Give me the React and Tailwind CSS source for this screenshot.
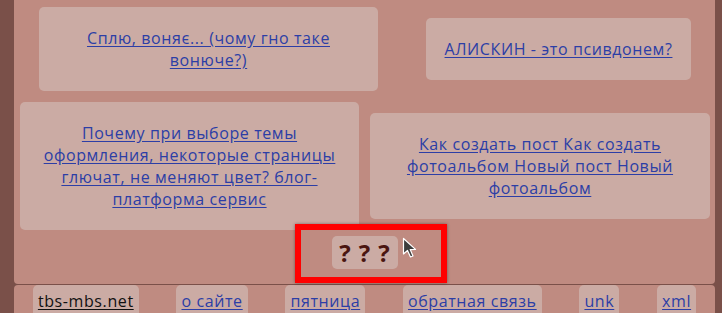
import React from "react";

const font = { fontFamily: '"Open Sans", "DejaVu Sans", sans-serif' };

function Card({ className = "", children }) {
  return (
    <div className={"rounded-[5px] bg-[#cbaba4] px-[18px] py-[20px] text-center text-[16px] leading-[22px] tracking-[0.6px] " + className}>
      <a href="#" className="text-[#2c3ea6] underline underline-offset-[2px]">{children}</a>
    </div>
  );
}

function FootItem({ children, dark }) {
  return (
    <div className="rounded-t-[5px] bg-[#cbaba4] px-[5px] pt-[5px] pb-[6px] text-[16px] leading-[22px] tracking-[0.6px]">
      <a href="#" className={(dark ? "text-[#111]" : "text-[#2c3ea6]") + " underline underline-offset-[2px]"}>{children}</a>
    </div>
  );
}

export default function App() {
  return (
    <div className="h-[313px] w-[722px] overflow-hidden bg-[#7a5049]" style={font}>
      <div className="ml-[14px] mr-[7px] rounded-b-[4px] bg-[#bf8b81] pb-[15px] pt-[7px]">
        <div className="flex items-center">
          <Card className="ml-[25px] w-[339px]">Сплю, воняє... (чому гно таке вонюче?)</Card>
          <Card className="ml-[48px] w-[265px]">АЛИСКИН - это псивдонем?</Card>
        </div>
        <div className="mt-[11px] flex items-center">
          <Card className="ml-[6px] w-[339px]">Почему при выборе темы оформления, некоторые страницы глючат, не меняют цвет? блог-платформа сервис</Card>
          <Card className="ml-[11px] w-[340px]">Как создать пост Как создать фотоальбом Новый пост Новый фотоальбом</Card>
        </div>
        <div className="mt-[6px] flex justify-center">
          <div className="relative">
            <div className="flex h-[33px] w-[66px] items-center justify-center gap-[8px] rounded-[5px] bg-[#cbaba4] text-[24px] leading-[33px] font-bold text-[#4a1510]">
              <span>?</span><span>?</span><span>?</span>
            </div>
            <div className="pointer-events-none absolute left-[-37px] top-[-12px] h-[59px] w-[152px] border-[6px] border-[#ff0000] shadow-[0_0_3px_rgba(0,0,0,0.4)]"></div>
            <svg className="absolute left-[70px] top-[1px]" width="16" height="22" viewBox="0 0 16 22">
              <path d="M1.5 1.5 L1.5 17 L5.5 13.5 L8.5 20 L11 19 L8.2 12.6 L13.5 12.4 Z" fill="#3d3d3d" stroke="#ffffff" strokeWidth="1.2" strokeLinejoin="round" />
            </svg>
          </div>
        </div>
      </div>
      <div className="ml-[14px] mr-[7px] mt-[1px] flex h-[40px] items-start justify-around rounded-t-[4px] bg-[#bf8b81]">
        <FootItem dark>tbs-mbs.net</FootItem>
        <FootItem>о сайте</FootItem>
        <FootItem>пятница</FootItem>
        <FootItem>обратная связь</FootItem>
        <FootItem>unk</FootItem>
        <FootItem>xml</FootItem>
      </div>
    </div>
  );
}
